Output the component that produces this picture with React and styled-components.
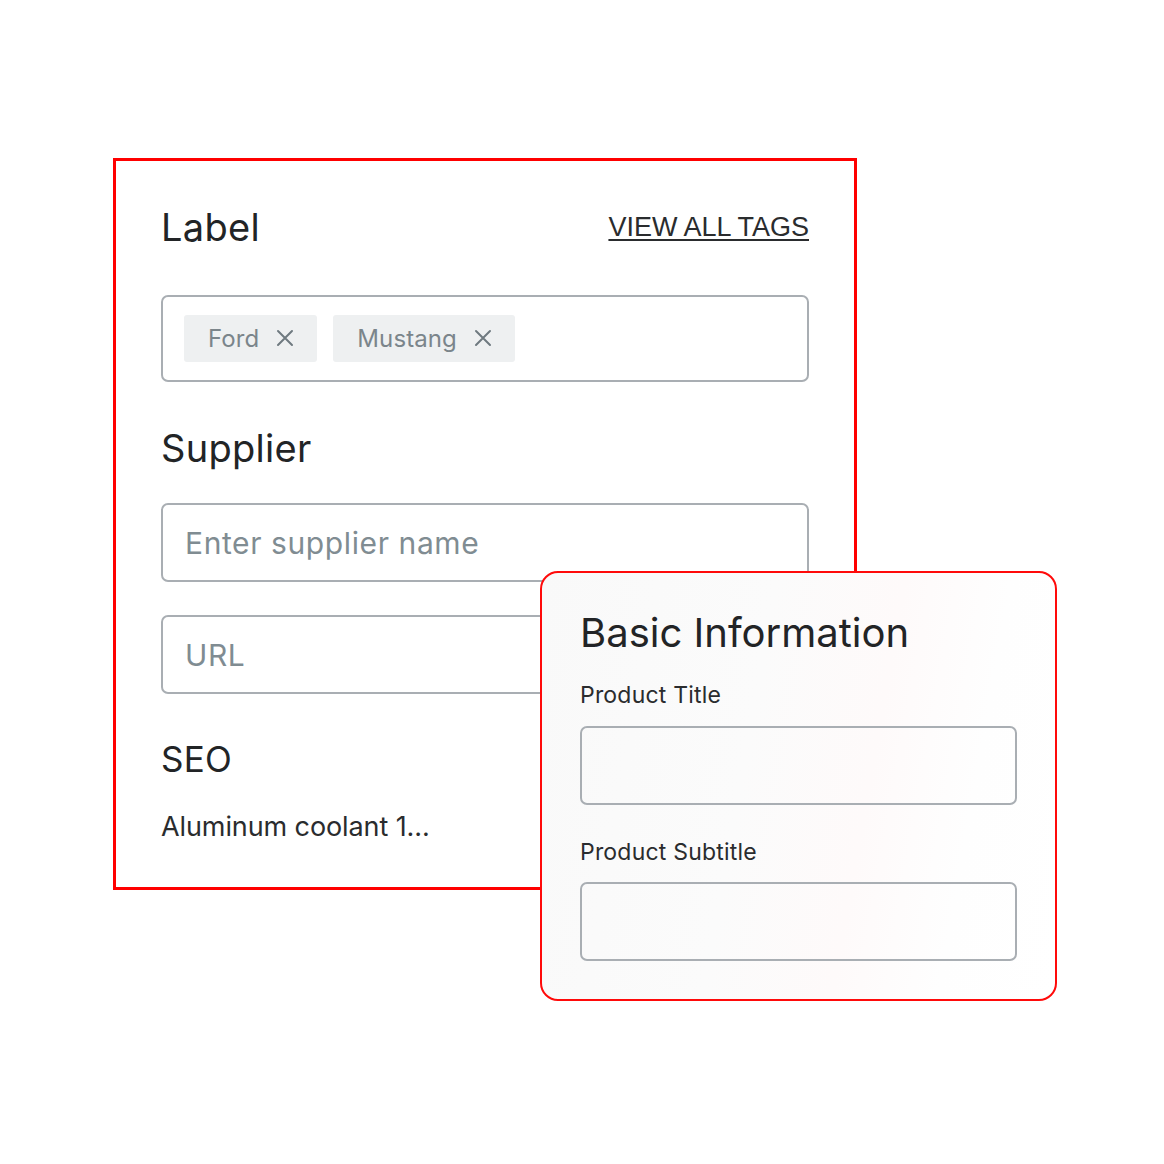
import styled, { createGlobalStyle } from 'styled-components';

const GlobalStyle = createGlobalStyle`
    html, body {
        margin: 0;
        padding: 0;
        background: #ffffff;
    }
    body {
        font-family: Inter, "Noto Sans", sans-serif;
        color: #222426;
    }
`;

const Stage = styled.div`
    position: relative;
    width: 1164px;
    height: 1164px;
    padding: 158px 0 0 113px;
    box-sizing: border-box;
`;

const Card = styled.section`
    width: 744px;
    height: 732px;
    box-sizing: border-box;
    border: 3px solid #ff0000;
    padding: 44px 45px 0 45px;
    display: flex;
    flex-direction: column;
`;

const HeaderRow = styled.div`
    display: flex;
    justify-content: space-between;
    align-items: flex-start;
`;

const Heading = styled.h2`
    margin: ${p => p.$mt || 0}px 0 0 0;
    font-size: ${p => p.$size || 38}px;
    font-weight: 400;
    line-height: 1.2;
    letter-spacing: ${p => p.$ls ?? 0.3}px;
    color: #222426;
`;

const LinkText = styled.a`
    margin-top: 7px;
    font-family: "Liberation Sans", Arial, sans-serif;
    font-size: 27px;
    color: #2a2c2e;
    text-decoration: underline;
    text-underline-offset: 3px;
    text-decoration-thickness: 1.5px;
    cursor: pointer;
`;

const TagBox = styled.div`
    margin-top: 44px;
    height: 87px;
    box-sizing: border-box;
    border: 2px solid #a9aeb3;
    border-radius: 7px;
    display: flex;
    align-items: center;
    gap: 16px;
    padding: 0 21px;
`;

const Chip = styled.span`
    display: inline-flex;
    align-items: center;
    gap: 17px;
    height: 47px;
    padding: 0 23px 0 24px;
    background: #eef0f1;
    border-radius: 3px;
    font-size: 24px;
    color: #7b858b;
    letter-spacing: 0.1px;
`;

const Field = styled.div`
    margin-top: ${p => p.$mt || 0}px;
    height: 79px;
    box-sizing: border-box;
    border: 2px solid #a9aeb3;
    border-radius: 7px;
    display: flex;
    align-items: center;
    padding: 0 22px;
    font-size: 30px;
    color: #808c92;
    letter-spacing: 0.6px;
    background: transparent;
`;

const BodyText = styled.p`
    margin: 30px 0 0 0;
    font-size: 27px;
    letter-spacing: -0.1px;
    color: #2a2c2e;
`;

const Overlay = styled.section`
    position: absolute;
    left: 540px;
    top: 571px;
    width: 517px;
    height: 430px;
    box-sizing: border-box;
    border: 2px solid #ff0a0a;
    border-radius: 18px;
    background: linear-gradient(100deg, #f9f9f9 0%, #fbfbfb 40%, #fefafa 62%, #fefefe 80%, #ffffff 100%);
    padding: 36px 38px 0 38px;
    display: flex;
    flex-direction: column;
`;

const SmallLabel = styled.div`
    margin-top: ${p => p.$mt || 0}px;
    font-size: 23px;
    color: #2a2c2e;
    letter-spacing: 0.2px;
`;

const CloseIcon = () => (
    <svg width="18" height="18" viewBox="0 0 18 18" fill="none" stroke="#6f7a80" strokeWidth="2" strokeLinecap="round">
        <path d="M2 2 L16 16 M16 2 L2 16" />
    </svg>
);

const App = () => {
    return (
        <>
            <GlobalStyle />
            <Stage>
                <Card>
                    <HeaderRow>
                        <Heading>Label</Heading>
                        <LinkText>VIEW ALL TAGS</LinkText>
                    </HeaderRow>

                    <TagBox>
                        <Chip>Ford <CloseIcon /></Chip>
                        <Chip>Mustang <CloseIcon /></Chip>
                    </TagBox>

                    <Heading $mt={44}>Supplier</Heading>
                    <Field $mt={32}>Enter supplier name</Field>
                    <Field $mt={33}>URL</Field>

                    <Heading $mt={44} $size={35}>SEO</Heading>
                    <BodyText>Aluminum coolant 1...</BodyText>
                </Card>

                <Overlay>
                    <Heading $size={40} $ls={0}>Basic Information</Heading>
                    <SmallLabel $mt={24}>Product Title</SmallLabel>
                    <Field $mt={17} />
                    <SmallLabel $mt={33}>Product Subtitle</SmallLabel>
                    <Field $mt={16} />
                </Overlay>
            </Stage>
        </>
    );
};

export default App;
